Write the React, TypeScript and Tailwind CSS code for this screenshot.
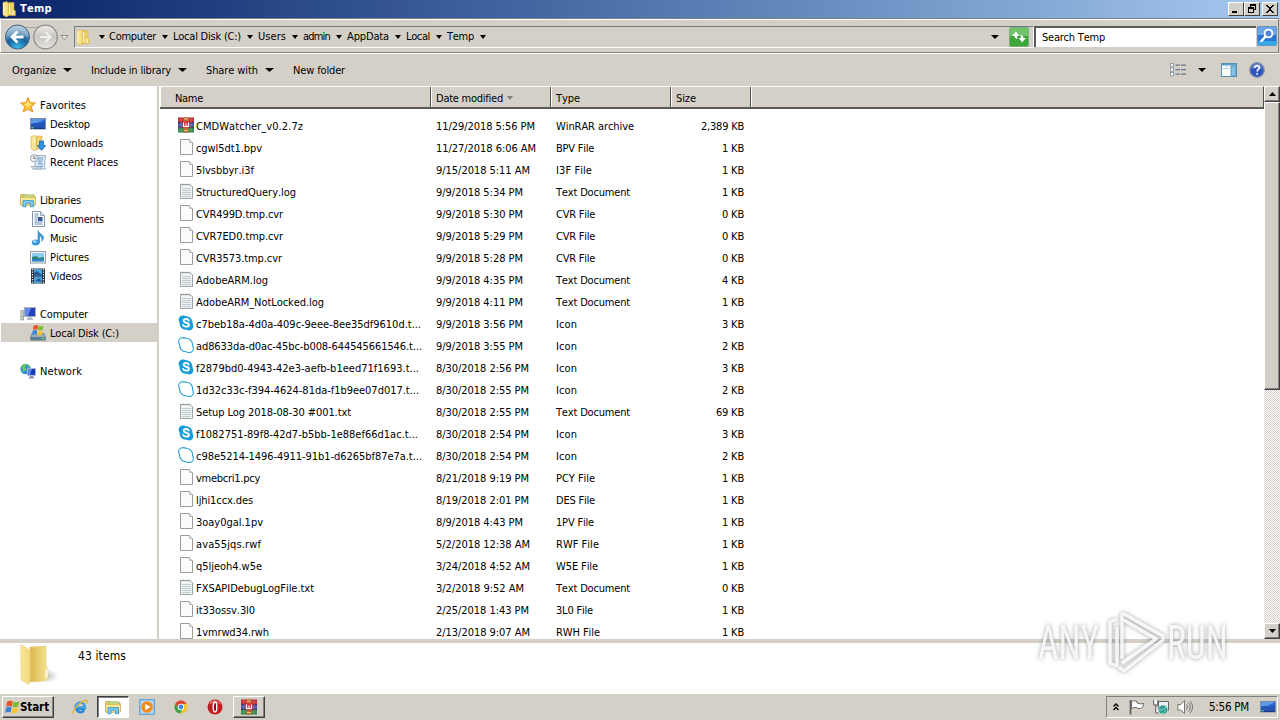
import { useLayoutEffect, useRef, useState } from "react";
import type { ReactNode } from "react";

const ADV: Record<string, number> = {
  " ": 3, ".": 3, ",": 3, ":": 4, "/": 4, "-": 4, "(": 4, ")": 4, _: 6, "#": 8,
  a: 6, b: 6, c: 5, d: 6, e: 6, f: 4, g: 6, h: 6, i: 2, j: 3, k: 5, l: 2, m: 8, n: 6, o: 6, p: 6, q: 6, r: 4,
  s: 5, t: 4, u: 6, v: 6, w: 8, x: 6, y: 5, z: 5,
  A: 7, B: 6, C: 7, D: 7, E: 6, F: 6, G: 7, H: 7, I: 4, J: 5, K: 7, L: 5, M: 9, N: 7, O: 8, P: 6, Q: 8, R: 7,
  S: 6, T: 6, U: 7, V: 6, W: 10, X: 6, Y: 6, Z: 6,
};
const advance = (s: string) => [...s].reduce((n, ch) => n + (ADV[ch] ?? 6), 0);

/* Label whose tracking is tuned so that it fills the given width. */
function T({ children, w, bold, tight }: { children: string; w?: number; bold?: boolean; tight?: boolean }) {
  const ref = useRef<HTMLSpanElement>(null);
  const [ls, setLs] = useState(0);
  const width = w ?? advance(children);
  useLayoutEffect(() => {
    const el = ref.current;
    if (el) setLs((width - el.getBoundingClientRect().width) / children.length);
  }, []);
  return (
    <span className={`block shrink-0 whitespace-pre ${tight ? "" : "pt-0.5"}`} style={{ width }}>
      <span ref={ref} className={bold ? "inline-block font-bold" : "inline-block"} style={{ letterSpacing: ls }}>
        {children}
      </span>
    </span>
  );
}

const Arrow = ({ size = 7, color = "#000" }: { size?: number; color?: string }) => (
  <svg width={size} height={4} viewBox="0 0 8 4" preserveAspectRatio="none" className="shrink-0">
    <path d="M0 0h8L4 4z" fill={color} />
  </svg>
);

function Svg({ children, s = 16 }: { children: ReactNode; s?: number }) {
  return <svg width={s} height={s} viewBox="0 0 16 16" className="shrink-0">{children}</svg>;
}

const FolderIcon = () => (
  <Svg>
    <path d="M2 1.500l4-1 1.500 2V15L5 16l-3-2z" fill="#f6e08a" stroke="#cfa83c" strokeWidth=".5" />
    <path d="M7.500 1.500H13v7l1.500 1.500v4.500H7z" fill="#eccf62" stroke="#d3ad45" strokeWidth=".5" />
    <path d="M2.800 2v11.500M8.500 3v10" stroke="#fff8cf" strokeWidth="1.100" />
    <path d="M12 10v4" stroke="#fff" />
  </Svg>
);
const StarIcon = () => (
  <Svg>
    <path d="M8 .7l2.100 5 5.300.4-4.100 3.400 1.400 5.500L8 12l-4.800 3 1.500-5.500L.6 6.100l5.300-.4z" fill="#ffc73a" stroke="#e88a1c" />
    <path d="M8 3l1.400 3.800 3 .2-3.500 1L8 10.500 5.500 8 3.500 7l3.200-.3z" fill="#ffe77d" />
  </Svg>
);
const DesktopIcon = () => (
  <Svg>
    <rect x=".5" y="2.500" width="15" height="10.500" fill="#2b66cf" stroke="#7d8ca5" />
    <path d="M1 3h14L1 10z" fill="#5e9aea" />
    <path d="M1 8c5-3 8 2 14-2v5H1z" fill="#2454b5" />
    <path d="M1 11.500h14v1.500H1z" fill="#173a80" />
    <path d="M1.500 11h2v1.500h-2z" fill="#6ecf6d" />
  </Svg>
);
const DownloadsIcon = () => (
  <Svg>
    <path d="M1 1.500l4-1 1.500 1V15l-2 .8L1 14z" fill="#f8e79b" stroke="#cfac4b" strokeWidth=".6" />
    <path d="M6.500 1H12v13H6.500z" fill="#efd16d" stroke="#cfac4b" strokeWidth=".6" />
    <path d="M9.500 6h4v4.500h2.300L11.500 15.500 7.300 10.500h2.200z" fill="#2f8fe0" stroke="#1b60ab" strokeWidth=".7" />
  </Svg>
);
const RecentIcon = () => (
  <Svg>
    <path d="M6 1.500h9.500l-1 11 1 2.500H4l1-3z" fill="#dbe8f2" stroke="#8ba1b5" strokeWidth=".8" />
    <path d="M8 4h5M8 6h5M8 8h4M8 10h5M7 12.500h6" stroke="#6f9cc4" />
    <circle cx="4" cy="4.200" r="3.500" fill="#f2f6fa" stroke="#8196aa" strokeWidth=".9" />
    <path d="M4 2v2.400h2" stroke="#456" fill="none" strokeWidth=".8" />
    <path d="M1 12.500h10v2.500H2.500z" fill="#c4d5e4" stroke="#8ba1b5" strokeWidth=".6" />
  </Svg>
);
const LibraryIcon = ({ s = 16 }: { s?: number }) => (
  <Svg s={s}>
    <path d="M.5 2.500h5l1.500 1.500h8v9H.5z" fill="#efd777" stroke="#c9a747" strokeWidth=".8" />
    <path d="M3 2.700h11v5H3z" fill="#b9e08c" stroke="#b89c3e" strokeWidth=".5" />
    <path d="M.5 5.300h15V13H.5z" fill="#f8e793" stroke="#cda94a" strokeWidth=".7" />
    <path d="M3 14.800V8.600h10.500v6.200h-3v-3.500h-4.500v3.500z" fill="#7ccbf3" stroke="#3c91c9" strokeWidth=".8" />
  </Svg>
);
const DocIcon = () => (
  <Svg>
    <path d="M2.500.5h8l4 4v11h-12z" fill="#fff" stroke="#8496a8" />
    <path d="M10.500.5v4h4" fill="#d5e2ef" stroke="#8496a8" strokeWidth=".8" />
    <path d="M4.500 3h4M4.500 5h4M4.500 7h3M4.500 9h3M4.500 11h8M4.500 13h8" stroke="#5b80ac" strokeWidth=".9" />
    <path d="M8 6h4.500v4H8z" fill="#31578e" />
  </Svg>
);
const MusicIcon = () => (
  <Svg>
    <path d="M8 .5c.6 3 5.800 4 5.500 7.500-.1 1.500-1 2.600-2 3.200C12.500 8 11 6.500 9.500 6v6.500H8z" fill="#3a9ddc" stroke="#2277b7" strokeWidth=".5" />
    <ellipse cx="5.700" cy="12.500" rx="3.900" ry="3" fill="#3796d8" />
    <ellipse cx="4.800" cy="11.500" rx="1.800" ry="1.200" fill="#a8daf8" />
  </Svg>
);
const PictureIcon = () => (
  <Svg>
    <rect x=".5" y="2.500" width="15" height="11.500" fill="#f4f6f8" stroke="#909ba6" />
    <path d="M2 4h12v8.500H2z" fill="#8bcdf0" />
    <path d="M2 8l4-1 3 2 5-1v2H2z" fill="#2f7d70" />
    <path d="M2 10h12v2.500H2z" fill="#2f83be" />
  </Svg>
);
const VideoIcon = () => (
  <Svg>
    <path d="M1 .5h14v15H1z" fill="#1e2c3c" />
    <path d="M4 1h8v6.500H4zM4 8.500h8V15H4z" fill="#4fa2dc" />
    <path d="M4 5l3-2 5 4H4zM5 13l4-3 3 4z" fill="#255b92" />
    <path d="M2.500 1v14M13.500 1v14" stroke="#f3f5f7" strokeWidth="1.300" strokeDasharray="1.300 1.200" />
  </Svg>
);
const ComputerIcon = () => (
  <Svg>
    <path d="M.8 4.500h2.700v9.500H.8z" fill="#cdd4cb" stroke="#829085" strokeWidth=".7" />
    <path d="M1.500 10h1.300v1.500H1.500z" fill="#5fc246" />
    <path d="M4.500 1.500h11v9h-11z" fill="#2440ba" stroke="#a4adbc" />
    <path d="M5 2h6l-3 8H5z" fill="#6388e8" />
    <path d="M8 11h4l1.500 3H6.500z" fill="#b8c0ce" />
  </Svg>
);
const Flag = () => (
  <>
    <path d="M2.800 2Q5 .5 7.800 1.700L7 6.300Q4.500 5.200 2 6.700z" fill="#e9552a" />
    <path d="M8.500 2Q11 3 13.500 1.800L12.700 6.300Q10.500 7.500 7.700 6.600z" fill="#7cbc33" />
    <path d="M1.800 7.300Q4.200 6 6.800 7L6 11.500Q3.500 10.500 1 12z" fill="#3e84d6" />
    <path d="M7.500 7.300Q10 8.300 12.500 7.200L11.700 11.700Q9 13 6.800 11.900z" fill="#fbc52e" />
  </>
);
const DiskIcon = () => (
  <Svg>
    <path d="M2 8.500h12l1.700 3.500v3.300H.5V12z" fill="#93adb9" stroke="#567482" strokeWidth=".6" />
    <path d="M1 12h14v3H1z" fill="#5b8090" />
    <path d="M11.500 13h2.500v1h-2.500z" fill="#72e255" />
    <g transform="translate(1 -1) scale(.92)"><Flag /></g>
  </Svg>
);
const NetworkIcon = () => (
  <Svg>
    <circle cx="5.600" cy="6" r="5.200" fill="#3192cf" />
    <path d="M1.500 3Q4 0 7 1L5 4.500 6.500 7 3 9zM7 3l3-1-1 3z" fill="#69c669" />
    <path d="M7.500 5.500h8v6.800h-8z" fill="#1937b6" stroke="#a9b7ce" />
    <path d="M8 6h4l-2 6H8z" fill="#5b86eb" />
    <path d="M10 13h3l1.500 2.500h-6z" fill="#8794ab" />
  </Svg>
);

const RarIcon = () => (
  <Svg>
    <path d="M0 .5h16v5H0z" fill="#bd2330" />
    <path d="M0 5.500h16v5H0z" fill="#3a49b0" />
    <path d="M0 10.500h16v5H0z" fill="#23874a" />
    <path d="M0 3h16M0 8h16M0 13h16" stroke="#fff" strokeOpacity=".35" strokeWidth=".7" />
    <path d="M0 5.500h16M0 10.500h16" stroke="#33263f" strokeWidth=".7" />
    <path d="M3 .5v15M13 .5v15" stroke="#e2a44c" strokeOpacity=".5" strokeWidth=".8" />
    <path d="M5.500.5h5v15h-5z" fill="#b8683a" />
    <path d="M4.500 4.500h7v6h-7z" fill="#d8343d" />
    <path d="M5.500 5.500v4h5v-4M8 6.500v3" fill="none" stroke="#fff" strokeWidth="1.100" />
    <path d="M6 2h4M6 13.500h4" stroke="#f0c565" />
  </Svg>
);
const FileIcon = () => (
  <Svg>
    <path d="M2.500.5h9l3 3v12h-12z" fill="#fbfbfb" stroke="#929292" strokeWidth=".9" />
    <path d="M11.500.5v3h3" fill="#eee" stroke="#aaa" strokeWidth=".8" />
  </Svg>
);
const TextIcon = () => (
  <Svg>
    <path d="M2.500 1.500h9l3 2v12h-12z" fill="#f0f3f3" stroke="#939999" strokeWidth=".9" />
    <path d="M4 5.500h9M4 7.500h9M4 9.500h9M4 11.500h9M4 13.500h9" stroke="#b3c0c6" strokeWidth=".8" />
    <path d="M3 1.500h9" stroke="#8e9598" strokeWidth="1.600" strokeDasharray="1 1" />
  </Svg>
);
const skypeShape = "M4.700.6C6 .5 7 1.200 8.300 1.200c4 .2 6.400 3.300 6.200 6.700 0 1 .9 1.800.9 3.300 0 2.500-2 4.300-4.200 4.300-1.300 0-2-.7-3.300-.7C4 14.600 1.500 11.600 1.600 8 1.600 7 .6 6.200.6 4.700.6 2.500 2.500.7 4.700.6z";
const SkypeIcon = () => (
  <Svg>
    <path d={skypeShape} fill="#159ddb" />
    <path d="M10.700 5.500C10 3.300 5.500 3.500 5.600 5.700c.1 2.600 5.300 1.500 5.300 4.200 0 2.200-5 2.400-5.700 0" fill="none" stroke="#fff" strokeWidth="1.900" strokeLinecap="round" />
  </Svg>
);
const SkypeOutline = () => (
  <Svg><path d={skypeShape} fill="#fff" stroke="#279fd6" strokeWidth="1.100" /></Svg>
);

type Kind = "rar" | "file" | "text" | "skype" | "outline";
const icons: Record<Kind, () => ReactNode> = {
  rar: RarIcon, file: FileIcon, text: TextIcon, skype: SkypeIcon, outline: SkypeOutline,
};
const files: [Kind, string, number, string, string, string][] = [
  ["rar", "CMDWatcher_v0.2.7z", 107, "11/29/2018 5:56 PM", "WinRAR archive", "2,389 KB"],
  ["file", "cgwl5dt1.bpv", 66, "11/27/2018 6:06 AM", "BPV File", "1 KB"],
  ["file", "5lvsbbyr.i3f", 58, "9/15/2018 5:11 AM", "I3F File", "1 KB"],
  ["text", "StructuredQuery.log", 100, "9/9/2018 5:34 PM", "Text Document", "1 KB"],
  ["file", "CVR499D.tmp.cvr", 87, "9/9/2018 5:30 PM", "CVR File", "0 KB"],
  ["file", "CVR7ED0.tmp.cvr", 87, "9/9/2018 5:29 PM", "CVR File", "0 KB"],
  ["file", "CVR3573.tmp.cvr", 86, "9/9/2018 5:28 PM", "CVR File", "0 KB"],
  ["text", "AdobeARM.log", 72, "9/9/2018 4:35 PM", "Text Document", "4 KB"],
  ["text", "AdobeARM_NotLocked.log", 128, "9/9/2018 4:11 PM", "Text Document", "1 KB"],
  ["skype", "c7beb18a-4d0a-409c-9eee-8ee35df9610d.t...", 225, "9/9/2018 3:56 PM", "Icon", "3 KB"],
  ["outline", "ad8633da-d0ac-45bc-b008-644545661546.t...", 226, "9/9/2018 3:55 PM", "Icon", "2 KB"],
  ["skype", "f2879bd0-4943-42e3-aefb-b1eed71f1693.t...", 223, "8/30/2018 2:56 PM", "Icon", "3 KB"],
  ["outline", "1d32c33c-f394-4624-81da-f1b9ee07d017.t...", 223, "8/30/2018 2:55 PM", "Icon", "2 KB"],
  ["text", "Setup Log 2018-08-30 #001.txt", 155, "8/30/2018 2:55 PM", "Text Document", "69 KB"],
  ["skype", "f1082751-89f8-42d7-b5bb-1e88ef66d1ac.t...", 222, "8/30/2018 2:54 PM", "Icon", "3 KB"],
  ["outline", "c98e5214-1496-4911-91b1-d6265bf87e7a.t...", 226, "8/30/2018 2:54 PM", "Icon", "2 KB"],
  ["file", "vmebcri1.pcy", 64, "8/21/2018 9:19 PM", "PCY File", "1 KB"],
  ["file", "ljhi1ccx.des", 57, "8/19/2018 2:01 PM", "DES File", "1 KB"],
  ["file", "3oay0gal.1pv", 67, "8/9/2018 4:43 PM", "1PV File", "1 KB"],
  ["file", "ava55jqs.rwf", 65, "5/2/2018 12:38 AM", "RWF File", "1 KB"],
  ["file", "q5ljeoh4.w5e", 66, "3/24/2018 4:52 AM", "W5E File", "1 KB"],
  ["text", "FXSAPIDebugLogFile.txt", 118, "3/2/2018 9:52 AM", "Text Document", "0 KB"],
  ["file", "it33ossv.3l0", 59, "2/25/2018 1:43 PM", "3L0 File", "1 KB"],
  ["file", "1vmrwd34.rwh", 73, "2/13/2018 9:07 AM", "RWH File", "1 KB"],
];
const typeWidths: Record<string, number> = {
  "WinRAR archive": 78, "Text Document": 74, Icon: 21, "BPV File": 38, "I3F File": 36, "CVR File": 39, "PCY File": 39,
  "DES File": 39, "1PV File": 38, "RWF File": 43, "W5E File": 42, "3L0 File": 37, "RWH File": 44,
};

type TreeItem = { t: string; w: number; icon: () => ReactNode; child?: boolean; sel?: boolean } | null;
const tree: TreeItem[] = [
  { t: "Favorites", w: 46, icon: StarIcon },
  { t: "Desktop", w: 40, icon: DesktopIcon, child: true },
  { t: "Downloads", w: 53, icon: DownloadsIcon, child: true },
  { t: "Recent Places", w: 68, icon: RecentIcon, child: true },
  null,
  { t: "Libraries", w: 41, icon: LibraryIcon },
  { t: "Documents", w: 54, icon: DocIcon, child: true },
  { t: "Music", w: 27, icon: MusicIcon, child: true },
  { t: "Pictures", w: 39, icon: PictureIcon, child: true },
  { t: "Videos", w: 32, icon: VideoIcon, child: true },
  null,
  { t: "Computer", w: 48, icon: ComputerIcon },
  { t: "Local Disk (C:)", w: 69, icon: DiskIcon, child: true, sel: true },
  null,
  { t: "Network", w: 42, icon: NetworkIcon },
];

const crumbs: [string, number][] = [
  ["Computer", 47], ["Local Disk (C:)", 68], ["Users", 28], ["admin", 27], ["AppData", 42], ["Local", 24], ["Temp", 27],
];

function TitleButton({ children }: { children: ReactNode }) {
  return (
    <div className="flex h-[14px] w-4 items-center justify-center border border-t-white border-r-[#404040] border-b-[#404040] border-l-white bg-[#d4d0c8]">
      <svg width="10" height="10" viewBox="0 0 10 10" shapeRendering="crispEdges">{children}</svg>
    </div>
  );
}

function TitleBar() {
  return (
    <header className="flex h-[18px] shrink-0 items-center bg-linear-to-r from-[#0a246a] to-[#a6caf0] pr-0.5 pl-px">
      <FolderIcon />
      <div className="ml-[3px] grow text-white"><T w={32} bold tight>Temp</T></div>
      <TitleButton><path d="M1 7h5v2H1z" /></TitleButton>
      <TitleButton>
        <path d="M3 0h6v6H7V5h1V2H4v1H3zM1 3h6v6H1zM2 5v3h4V5z" fillRule="evenodd" />
      </TitleButton>
      <div className="w-0.5" />
      <TitleButton>
        <path d="M1 1h2v1h1v1h2V2h1V1h2v1H8v1H7v1H6v2h1v1h1v1h1v1H7V8H6V7H4v1H3v1H1V8h1V7h1V6h1V4H3V3H2V2H1z" />
      </TitleButton>
    </header>
  );
}

function NavBar() {
  return (
    <div className="flex h-[36px] shrink-0 items-start border-b border-b-white bg-[#d4d0c8]">
      <div className="flex h-[35px] w-[1279px] items-start border border-t-[#808080] border-r-[#808080] border-b-[#808080] border-l-white pt-[7px] shadow-[inset_0_1px_0_#fff]">
        <svg width="68" height="26" viewBox="0 0 68 26" className="-mt-0.5 ml-[3px] shrink-0">
          <defs>
            <radialGradient id="back" cx=".5" cy="1" r=".95">
              <stop offset="0" stopColor="#3fc5ef" />
              <stop offset=".5" stopColor="#17639d" />
              <stop offset="1" stopColor="#a9c5dc" />
            </radialGradient>
            <linearGradient id="fwd" x2="0" y2="1">
              <stop offset="0" stopColor="#edebe8" />
              <stop offset=".5" stopColor="#c9c7c3" />
              <stop offset="1" stopColor="#e6e4e1" />
            </linearGradient>
          </defs>
          <path d="M13 1.500Q27 6 41 1.500" fill="none" stroke="#aaa69f" />
          <circle cx="13.500" cy="13" r="12" fill="url(#back)" stroke="#42617d" />
          <path d="M2.500 13a11 11 0 0 1 22 0Q13 9 2.500 13z" fill="#fff" fillOpacity=".22" />
          <path d="M19.500 13H8.500M13.500 7.500L8 13l5.500 5.500" fill="none" stroke="#fff" strokeWidth="2.800" />
          <circle cx="41.500" cy="13" r="11.800" fill="url(#fwd)" stroke="#8f8d89" strokeWidth="1.300" />
          <path d="M36 13h10.500M41.500 8l5 5-5 5" fill="none" stroke="#f2f1ef" strokeWidth="2" />
          <path d="M57 11.500h7l-3.500 4z" fill="#f2f0ec" stroke="#77746e" strokeWidth=".8" />
        </svg>
        <div className="ml-0.5 flex h-[22px] w-[960px] shrink-0 items-center border border-t-[#6e7b80] border-r-white border-b-white border-l-[#6e7b80]">
          <FolderIcon />
          <div className="flex w-[18px] shrink-0 items-center pl-2"><Arrow size={6} /></div>
          <div className="flex grow items-center">
            {crumbs.map(([t, w]) => (
              <div key={t} className="flex items-center">
                <T w={w} tight>{t}</T>
                <div className="flex w-[17px] justify-center"><Arrow size={6} /></div>
              </div>
            ))}
          </div>
          <div className="pr-[10px]"><Arrow size={8} /></div>
          <svg width="20" height="20" viewBox="0 0 20 20" className="mr-[4px] shrink-0">
            <rect x=".5" y=".5" width="19" height="19" rx="1.500" fill="#3da63b" stroke="#77b079" />
            <path d="M1 1h18v8H1z" fill="#6fc46d" />
            <path d="M7 4.500L3 9h2.500c0 2 1.500 3 3.500 3-1-1-1-2-.8-3h2zM13 15.500l4-4.500h-2.500c0-2-1.500-3-3.500-3 1 1 1 2 .8 3h-2z" fill="#fff" />
          </svg>
        </div>
        <div className="flex h-[21px] w-[222px] shrink-0 items-center border-t-2 border-l-2 border-t-[#5b5b5b] border-l-[#5b5b5b] bg-white pl-[6px]">
          <T w={63} tight>Search Temp</T>
        </div>
        <svg width="20" height="20" viewBox="0 0 20 20" className="ml-px shrink-0">
          <rect x=".5" y=".5" width="19" height="19" rx="1" fill="#2b74cf" stroke="#6294cc" />
          <path d="M1 1h18v8H1z" fill="#6ba6e8" />
          <path d="M1 15h18v4H1z" fill="#33a9e8" />
          <circle cx="11.500" cy="7.500" r="3.900" fill="#4c87da" stroke="#fff" strokeWidth="1.900" />
          <path d="M8.500 10.500L4.500 15" stroke="#fff" strokeWidth="2.500" strokeLinecap="round" />
        </svg>
      </div>
    </div>
  );
}

function ToolBar() {
  return (
    <div className="flex h-8 shrink-0 items-center pl-3">
      <T w={44}>Organize</T>
      <div className="mr-[19px] ml-[7px] flex"><Arrow size={9} /></div>
      <T w={80}>Include in library</T>
      <div className="mr-[19px] ml-[7px] flex"><Arrow size={9} /></div>
      <T w={52}>Share with</T>
      <div className="mr-[19px] ml-[7px] flex"><Arrow size={9} /></div>
      <T w={52}>New folder</T>
      <div className="grow" />
      <svg width="16" height="14" viewBox="0 0 16 14" className="mr-[12px]">
        {[0.5, 5, 9.5].map((y) => (
          <g key={y}>
            <rect x=".5" y={y} width="3" height="3.300" fill="#fff" stroke="#8795a2" strokeWidth=".9" />
            <path d={`M5.500 ${y + 1.7}h4.500M11 ${y + 1.7}h5`} stroke="#66758a" strokeWidth="1.200" />
          </g>
        ))}
      </svg>
      <Arrow size={8} />
      <svg width="16" height="14" viewBox="0 0 16 14" className="ml-[15px]">
        <rect x=".5" y=".5" width="15" height="13" fill="#fff" stroke="#5590b5" />
        <path d="M1 1h14v1.500H1z" fill="#5aa0cb" />
        <path d="M10 3h5v10h-5z" fill="#83c3e5" stroke="#4a8cb8" strokeWidth=".8" />
        <path d="M5.500 3v2.500M1 5.500h9" stroke="#b5cbd8" strokeWidth=".8" />
      </svg>
      <svg width="16" height="16" viewBox="0 0 16 16" className="mr-[15px] ml-3">
        <circle cx="8" cy="8" r="7.300" fill="#2c55bd" stroke="#8b96ad" strokeWidth="1.300" />
        <path d="M2.500 7a5.500 5.500 0 0 1 11 0Q8 5 2.500 7z" fill="#fff" fillOpacity=".25" />
        <path d="M5.700 6c0-3.200 4.800-3 4.700-.2C10.400 7.500 8.100 7.500 8.100 9.600M8.100 11v1.700" fill="none" stroke="#fff" strokeWidth="1.600" />
      </svg>
    </div>
  );
}

function SideTree() {
  return (
    <nav className="w-[157px] shrink-0 bg-white pt-[9px] pl-px">
      {tree.map((n, i) =>
        n === null ? (
          <div key={i} className="h-[19px]" />
        ) : (
          <div
            key={i}
            className={`flex h-[19px] items-center ${n.child ? "pl-[29px]" : "pl-[19px]"} ${n.sel ? "bg-[#d4d0c8]" : ""}`}
          >
            <n.icon />
            <div className="pt-px pl-1"><T w={n.w}>{n.t}</T></div>
          </div>
        ),
      )}
    </nav>
  );
}

const headCell = "flex h-full shrink-0 items-center border-r border-l border-r-[#505050] border-l-white pt-px";

function FileList() {
  return (
    <main className="flex grow flex-col overflow-hidden bg-white">
      <div className="flex h-[23px] shrink-0 border-t border-r border-b-2 border-t-white border-r-[#505050] border-b-[#5a5a5a] bg-[#d4d0c8]">
        <div className={`${headCell} w-[271px] pl-[14px]`}><T w={28}>Name</T></div>
        <div className={`${headCell} w-[120px] pl-1`}>
          <T w={67}>Date modified</T>
          <div className="ml-1 flex pt-px"><Arrow size={6} color="#85817a" /></div>
        </div>
        <div className={`${headCell} w-[120px] pl-1`}><T w={24}>Type</T></div>
        <div className={`${headCell} w-[80px] pl-1`}><T w={20}>Size</T></div>
        <div className="grow border-l border-l-white" />
      </div>
      <div className="pt-[6px] pl-[18px]">
        {files.map(([k, name, w, date, type, size]) => {
          const Icon = icons[k];
          return (
            <div key={name} className="flex h-[22px] items-center">
              <div className="-mt-[3px] flex"><Icon /></div>
              <div className="w-[242px] pl-0.5"><T w={w}>{name}</T></div>
              <div className="w-[120px]"><T>{date}</T></div>
              <div className="w-[121px]"><T w={typeWidths[type]}>{type}</T></div>
              <div className="flex w-[67px] justify-end"><T>{size}</T></div>
            </div>
          );
        })}
      </div>
    </main>
  );
}

const raised =
  "border border-t-white border-r-[#404040] border-b-[#404040] border-l-white bg-[#d4d0c8] shadow-[inset_-1px_-1px_0_#808080]";

function ScrollBar() {
  return (
    <div className="flex w-4 shrink-0 flex-col bg-[repeating-conic-gradient(#fff_0_25%,#d4d0c8_0_50%)] bg-size-[2px_2px]">
      <div className={`flex h-4 items-center justify-center ${raised}`}>
        <div className="rotate-180"><Arrow size={7} /></div>
      </div>
      <div className={`h-[288px] ${raised}`} />
      <div className="grow" />
      <div className={`flex h-4 items-center justify-center ${raised}`}><Arrow size={7} /></div>
    </div>
  );
}

function DetailsPane() {
  return (
    <footer className="flex h-[49px] shrink-0 bg-white pl-5">
      <svg width="38" height="43" viewBox="0 0 38 43" className="shrink-0">
        <defs>
          <linearGradient id="fold" x2="1" y2="0">
            <stop offset="0" stopColor="#f8e795" />
            <stop offset="1" stopColor="#f2da7e" />
          </linearGradient>
          <linearGradient id="backleaf" x2="1" y2="0">
            <stop offset="0" stopColor="#dcb851" />
            <stop offset="1" stopColor="#f6e594" />
          </linearGradient>
          <radialGradient id="shade">
            <stop offset="0" stopColor="#777" stopOpacity=".45" />
            <stop offset="1" stopColor="#777" stopOpacity="0" />
          </radialGradient>
        </defs>
        <ellipse cx="27" cy="33" rx="11" ry="7" fill="url(#shade)" />
        <path d="M10 4l16-1v20l2 3v9l-3 3-15 1z" fill="url(#backleaf)" stroke="#e3c868" strokeWidth=".5" />
        <path d="M.8 1.500L10 7v31l-1.500 3.500L1 37z" fill="url(#fold)" stroke="#e6cd78" strokeWidth=".5" />
        <path d="M25.500 27l2-1v8l-2 1z" fill="#fffdf0" />
      </svg>
      <div className="pt-[4px] pl-5 text-[12px]"><T w={48}>43 items</T></div>
    </footer>
  );
}

function TaskBar() {
  return (
    <div className="flex h-7 shrink-0 items-start border-t-2 border-t-white bg-[#d4d0c8] pt-0.5">
      <div className={`ml-0.5 flex h-[22px] w-[52px] items-center pl-px ${raised}`}>
        <Svg><g transform="translate(0 .5) scale(1.120)"><Flag /></g></Svg>
        <div className="text-[11.5px]"><T w={29} bold tight>Start</T></div>
      </div>
      <div className="flex h-[22px] items-center pl-[18px]">
        <Svg>
          <path d="M13.300 9.700H4.500a4 4 0 0 0 7.500 1.400" fill="none" stroke="#2484d2" strokeWidth="2.400" />
          <path d="M3.500 8.500C3.500 2 12.500 1.700 13 8.500z" fill="none" stroke="#3ca0e4" strokeWidth="2.400" />
          <path d="M1.500 14.800C-1 12 8 3 14 1.200c2.300-.6 1.500 2 .5 3.500" fill="none" stroke="#e1b62f" strokeWidth="1.300" />
        </Svg>
      </div>
      <div className="ml-[9px] flex h-[22px] w-8 items-center justify-center border border-t-[#404040] border-r-white border-b-white border-l-[#404040] bg-white shadow-[inset_1px_1px_0_#808080]">
        <LibraryIcon />
      </div>
      <div className="flex h-[22px] items-center gap-[18px] pl-[10px]">
        <Svg>
          <rect x=".7" y=".7" width="14.600" height="14.600" fill="#b8d8f1" stroke="#5e9ed7" strokeWidth="1.200" />
          <circle cx="8" cy="8" r="5.800" fill="#f28a1b" />
          <path d="M6.200 4.700v6.600L11.500 8z" fill="#fff" />
        </Svg>
        <Svg>
          <circle cx="8" cy="8" r="6.500" fill="#f4c52b" />
          <path d="M2.300 4.800A6.500 6.500 0 0 1 13.700 4.800L8 5 6 10z" fill="#dc4437" />
          <path d="M2.300 4.800A6.500 6.500 0 0 0 7.200 14.500L10 9 5 9z" fill="#34a150" />
          <circle cx="8" cy="8" r="3.200" fill="#fff" />
          <circle cx="8" cy="8" r="2.400" fill="#4285e5" />
        </Svg>
        <Svg>
          <circle cx="8" cy="8" r="7.500" fill="#c71920" />
          <path d="M2 5.500a6.500 6.500 0 0 1 12 0Q8 2 2 5.500z" fill="#e66b6b" />
          <ellipse cx="8" cy="8" rx="1.800" ry="5" fill="#8d0d13" stroke="#fff" strokeWidth="1.400" />
        </Svg>
      </div>
      <div className={`ml-[10px] flex h-[22px] w-8 items-center justify-center ${raised}`}><RarIcon /></div>
      <div className="grow" />
      <div className="mr-0.5 flex h-[22px] w-[172px] items-center border border-t-[#808080] border-r-white border-b-white border-l-[#808080]">
        <svg width="6" height="8" viewBox="0 0 6 8" className="ml-[6px]">
          <path d="M.5 3.500L3 1l2.500 2.500M.5 7L3 4.500 5.500 7" fill="none" stroke="#000" strokeWidth="1.300" />
        </svg>
        <div className="ml-[10px] flex gap-2">
          <Svg>
            <path d="M1.500 1v14.500" stroke="#62615e" strokeWidth="1.800" />
            <path d="M2.500 2.500Q5 1 8 2.500v1.500q4 1.500 7 .5-1 4-3 5-3 .5-5-1Q5 8 2.500 9.500z" fill="#fff" stroke="#62615e" strokeWidth=".9" />
          </Svg>
          <Svg>
            <path d="M5.500 2.500h10v9h-10z" fill="#e8f0f0" stroke="#59696c" />
            <path d="M.8 1v5h4V1M2.800 6v8h3" fill="#fff" stroke="#555" />
            <circle cx="10" cy="10.800" r="4.700" fill="#2d9b91" stroke="#d7eeea" strokeWidth=".6" />
            <path d="M6 11q4 1 7-3M8 15q3-1 5-4" stroke="#8fe0c8" fill="none" />
          </Svg>
          <Svg>
            <path d="M.8 5.500h3L7.500 1.500v13L3.800 11h-3z" fill="#fff" stroke="#666" strokeWidth=".9" />
            <path d="M9.500 5.500q2 2.500 0 5M11.500 3.500q3.500 4.500 0 9M13.300 2q4.500 6 0 12" stroke="#6b6b6b" fill="none" strokeWidth=".9" />
          </Svg>
        </div>
        <div className="ml-4 text-[11.5px]"><T w={40} tight>5:56 PM</T></div>
        <div className="ml-[11px] flex"><DesktopIcon /></div>
      </div>
    </div>
  );
}

function Watermark() {
  return (
    <svg
      width="220"
      height="90"
      viewBox="0 0 220 90"
      className="absolute top-[603px] left-[1030px] overflow-visible drop-shadow-[0_0_2px_rgba(70,70,70,0.6)]"
    >
      <g fill="#fff" fillOpacity=".85" fontFamily="Roboto, sans-serif" fontSize="48">
        <text transform="translate(8 56) scale(.74 1)">ANY</text>
        <text transform="translate(137 56) scale(.74 1)">RUN</text>
      </g>
      <g fill="none" stroke="#fff" strokeOpacity=".85" strokeWidth="3.500" strokeLinejoin="round">
        <path d="M86 16l-6 3v41l7 3V24" />
        <path d="M92 10v46M92 10l41 23v4L94 68l-5-4M92 16l34 20-34 24" />
      </g>
    </svg>
  );
}

export default function App() {
  return (
    <div className="relative flex h-[720px] w-[1280px] flex-col overflow-hidden bg-[#d4d0c8] font-['DejaVu_Sans_Condensed','DejaVu_Sans',sans-serif] text-[11px] leading-[14px] text-black [font-kerning:none] [font-stretch:condensed]">
      <TitleBar />
      <NavBar />
      <ToolBar />
      <div className="flex h-[553px] shrink-0">
        <SideTree />
        <div className="w-[3px] shrink-0 border-r border-r-white" />
        <FileList />
        <ScrollBar />
      </div>
      <div className="h-1 shrink-0" />
      <DetailsPane />
      <TaskBar />
      <Watermark />
    </div>
  );
}
